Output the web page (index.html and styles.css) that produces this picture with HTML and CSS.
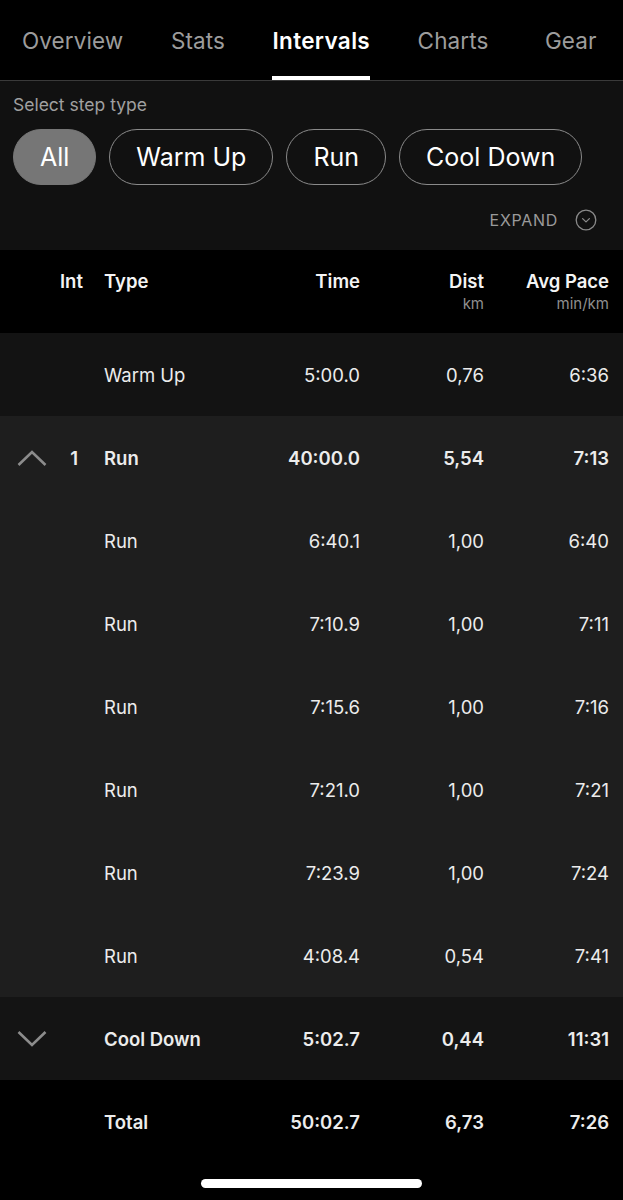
FILE: index.html
```html
<!DOCTYPE html>
<html lang="en">
<head>
<meta charset="utf-8">
<title>Intervals</title>
<link rel="stylesheet" href="styles.css">
</head>
<body>
<div class="screen">
  <nav class="tabs">
    <div class="tab">Overview</div>
    <div class="tab">Stats</div>
    <div class="tab active">Intervals</div>
    <div class="tab">Charts</div>
    <div class="tab last">Gear</div>
  </nav>

  <section class="filters">
    <div class="filter-label">Select step type</div>
    <div class="chips">
      <div class="chip selected">All</div>
      <div class="chip">Warm Up</div>
      <div class="chip">Run</div>
      <div class="chip">Cool Down</div>
    </div>
    <div class="expand">
      <span>EXPAND</span>
      <svg class="expand-icon" width="22" height="22" viewBox="0 0 22 22">
        <circle cx="11" cy="11" r="9.8" fill="none" stroke="#8a8a8a" stroke-width="1.3"/>
        <path d="M7.6 9.6 L11 12.9 L14.4 9.6" fill="none" stroke="#8a8a8a" stroke-width="1.3" stroke-linecap="round" stroke-linejoin="round"/>
      </svg>
    </div>
  </section>

  <div class="table">
    <div class="row head">
      <div class="c-icon"></div>
      <div class="c-int">Int</div>
      <div class="c-type">Type</div>
      <div class="c-num">Time</div>
      <div class="c-num">Dist<span class="unit">km</span></div>
      <div class="c-num">Avg Pace<span class="unit">min/km</span></div>
    </div>

    <div class="row warm">
      <div class="c-icon"></div>
      <div class="c-int"></div>
      <div class="c-type">Warm Up</div>
      <div class="c-num">5:00.0</div>
      <div class="c-num">0,76</div>
      <div class="c-num">6:36</div>
    </div>

    <div class="group">
      <div class="row bold">
        <div class="c-icon">
          <svg width="30" height="18" viewBox="0 0 30 18"><path d="M1.5 16 L15 3 L28.5 16" fill="none" stroke="#8c8c8c" stroke-width="2.6"/></svg>
        </div>
        <div class="c-int">1</div>
        <div class="c-type">Run</div>
        <div class="c-num">40:00.0</div>
        <div class="c-num">5,54</div>
        <div class="c-num">7:13</div>
      </div>
      <div class="row">
        <div class="c-icon"></div><div class="c-int"></div>
        <div class="c-type">Run</div><div class="c-num">6:40.1</div><div class="c-num">1,00</div><div class="c-num">6:40</div>
      </div>
      <div class="row">
        <div class="c-icon"></div><div class="c-int"></div>
        <div class="c-type">Run</div><div class="c-num">7:10.9</div><div class="c-num">1,00</div><div class="c-num">7:11</div>
      </div>
      <div class="row">
        <div class="c-icon"></div><div class="c-int"></div>
        <div class="c-type">Run</div><div class="c-num">7:15.6</div><div class="c-num">1,00</div><div class="c-num">7:16</div>
      </div>
      <div class="row">
        <div class="c-icon"></div><div class="c-int"></div>
        <div class="c-type">Run</div><div class="c-num">7:21.0</div><div class="c-num">1,00</div><div class="c-num">7:21</div>
      </div>
      <div class="row">
        <div class="c-icon"></div><div class="c-int"></div>
        <div class="c-type">Run</div><div class="c-num">7:23.9</div><div class="c-num">1,00</div><div class="c-num">7:24</div>
      </div>
      <div class="row">
        <div class="c-icon"></div><div class="c-int"></div>
        <div class="c-type">Run</div><div class="c-num">4:08.4</div><div class="c-num">0,54</div><div class="c-num">7:41</div>
      </div>
    </div>

    <div class="row bold cool">
      <div class="c-icon">
        <svg width="30" height="18" viewBox="0 0 30 18"><path d="M1.5 2 L15 15 L28.5 2" fill="none" stroke="#8c8c8c" stroke-width="2.6"/></svg>
      </div>
      <div class="c-int"></div>
      <div class="c-type">Cool Down</div>
      <div class="c-num">5:02.7</div>
      <div class="c-num">0,44</div>
      <div class="c-num">11:31</div>
    </div>

    <div class="row bold total">
      <div class="c-icon"></div>
      <div class="c-int"></div>
      <div class="c-type">Total</div>
      <div class="c-num">50:02.7</div>
      <div class="c-num">6,73</div>
      <div class="c-num">7:26</div>
    </div>
  </div>

  <div class="home-bar"></div>
</div>
</body>
</html>
```

FILE: styles.css
```css
* { box-sizing: border-box; }

html, body {
  margin: 0;
  padding: 0;
  background: #000;
}

body {
  font-family: Inter, "Noto Sans", "Liberation Sans", sans-serif;
  color: #f2f2f2;
  width: 623px;
  height: 1200px;
  overflow: hidden;
}

.screen {
  position: relative;
  width: 623px;
  height: 1200px;
  background: #000;
  display: flex;
  flex-direction: column;
}

/* Tabs */
.tabs {
  height: 81px;
  display: flex;
  align-items: stretch;
  padding-left: 22px;
  gap: 47.5px;
  border-bottom: 1px solid #3a3a3a;
  background: #000;
}

.tab {
  font-size: 22.5px;
  color: #9c9c9c;
  display: flex;
  align-items: center;
  border-bottom: 4px solid transparent;
  padding-top: 4px;
  letter-spacing: 0.1px;
}

.tab.active {
  color: #fff;
  font-weight: 600;
  border-bottom-color: #fff;
  letter-spacing: 0.35px;
}

.tab.last { margin-left: 9px; }

/* Filters */
.filters {
  background: #111;
  height: 169px;
  padding: 13px 0 0 13px;
  display: flex;
  flex-direction: column;
}

.filter-label {
  font-size: 17.5px;
  color: #a0a0a0;
  line-height: 22px;
}

.chips {
  display: flex;
  gap: 13px;
  margin-top: 13px;
}

.chip {
  height: 56px;
  border: 1.5px solid #8a8a8a;
  border-radius: 28px;
  padding: 0 26px;
  display: flex;
  align-items: center;
  font-size: 25px;
  color: #fff;
}

.chip.selected {
  background: #767676;
  border-color: #767676;
}

.expand {
  display: flex;
  align-items: center;
  justify-content: flex-end;
  gap: 17px;
  margin-top: 24px;
  padding-right: 26px;
  font-size: 16px;
  color: #9a9a9a;
  letter-spacing: 0.7px;
}

/* Table */
.table {
  display: flex;
  flex-direction: column;
}

.row {
  height: 83px;
  display: grid;
  grid-template-columns: 60px 18px 1fr 100px 124px 125px;
  padding-right: 14px;
  align-items: center;
  font-size: 18.5px;
  color: #ececec;
}

.row.head {
  background: #000;
  align-items: start;
  padding-top: 20px;
  font-weight: 600;
  color: #f4f4f4;
}

.row.warm { background: #131313; }
.group { background: #1e1e1e; }
.row.cool { background: #141414; }
.row.total { background: #000; }

.row.bold { font-weight: 600; }

.c-icon {
  display: flex;
  align-items: center;
  padding-left: 17px;
}

.c-int { text-align: right; }

.c-type { padding-left: 26px; }

.c-num {
  text-align: right;
  display: flex;
  flex-direction: column;
  align-items: flex-end;
}

.unit {
  font-size: 15px;
  font-weight: 400;
  color: #8f8f8f;
  margin-top: 2px;
}

.home-bar {
  position: absolute;
  left: 201px;
  top: 1179px;
  width: 221px;
  height: 9px;
  border-radius: 5px;
  background: #fff;
}
```
